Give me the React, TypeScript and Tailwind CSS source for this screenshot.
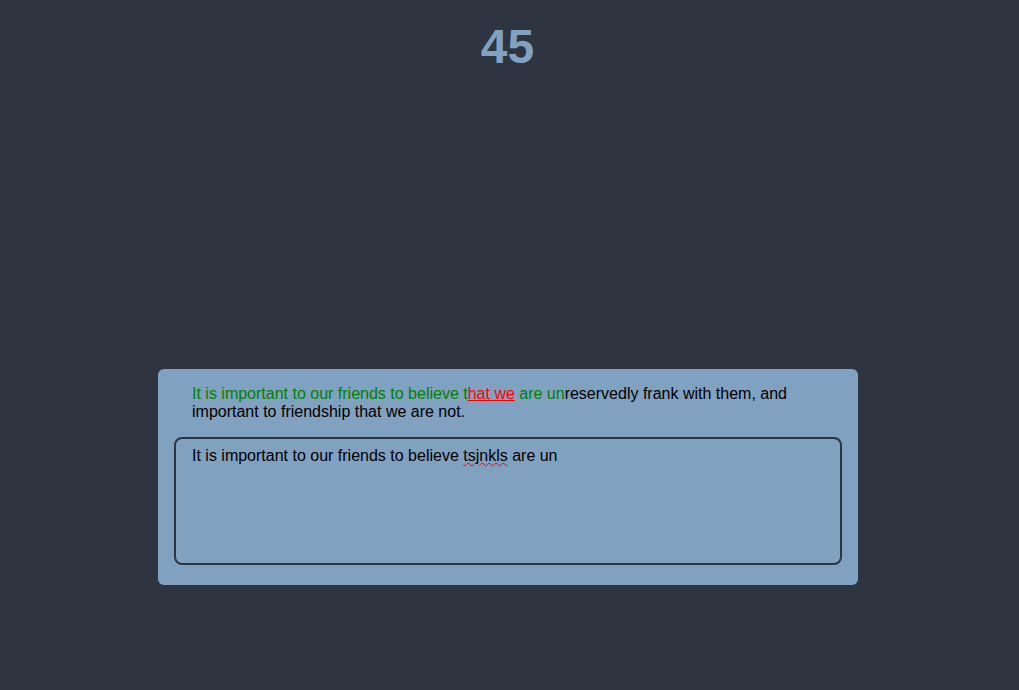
const App = () => {
    return (
        <div className="min-h-[690px] bg-[#2e3440] font-['Liberation_Sans',Arial,sans-serif]">
            <h1 className="pt-5 pr-[4px] text-center text-[48px] font-bold leading-[1.12] text-[#81a1c1]">45</h1>
            <div className="mt-[295px] ml-[158px] w-[700px] rounded-md bg-[#81a1c1] px-4 pt-4 pb-5">
                <p className="pl-[18px] text-[16px] leading-[18px] text-black">
                    <span className="text-[#008000]">It is important to our friends to believe t</span>
                    <span className="text-[#ff0000] underline">hat we</span>
                    <span className="text-[#008000]"> are un</span>
                    reservedly frank with them, and important to friendship that we are not.
                </p>
                <div className="mt-4 h-[128px] rounded-lg border-2 border-[#2e3440] pl-4 pt-2 text-[16px] leading-[1.15] text-black">
                    It is important to our friends to believe{" "}
                    <span className="underline decoration-[#ff0000] decoration-wavy decoration-1">tsjnkls</span> are un
                </div>
            </div>
        </div>
    );
};

export default App;
